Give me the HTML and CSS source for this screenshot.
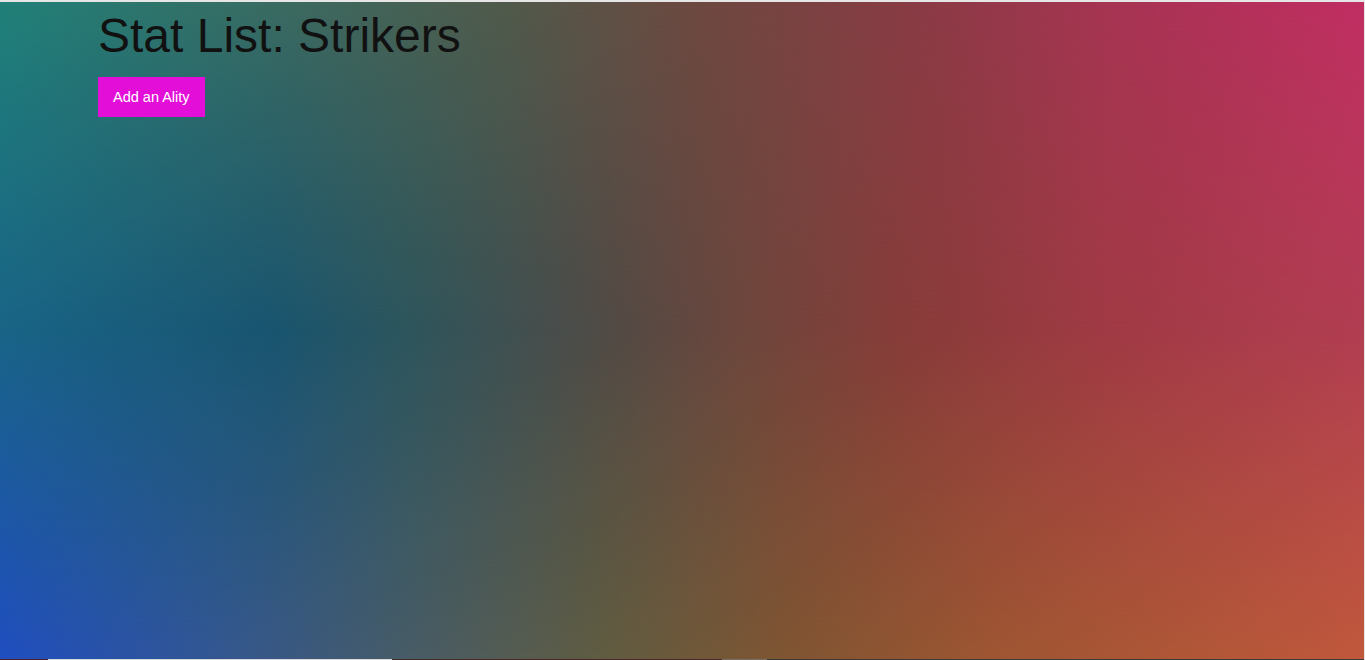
FILE: index.html
```
<!DOCTYPE html>
<html lang="en">
<head>
<meta charset="utf-8">
<title>Stat List: Strikers</title>
<link rel="stylesheet" href="styles.css">
</head>
<body>
<div class="frame">
  <main class="hero">
    <div class="container">
      <h1 class="title">Stat List: Strikers</h1>
      <button class="add-btn" type="button">Add an Ality</button>
    </div>
  </main>
  <div class="strip">
    <span class="seg seg-a"></span>
    <span class="seg seg-b"></span>
    <span class="seg seg-c"></span>
    <span class="seg seg-d"></span>
    <span class="seg seg-e"></span>
  </div>
</div>
</body>
</html>
```

FILE: styles.css
```
html, body {
  margin: 0;
  padding: 0;
  height: 100%;
  overflow: hidden;
}

body {
  font-family: "Liberation Sans", Arial, sans-serif;
  background: #e8e8e8;
}

.frame {
  display: flex;
  flex-direction: column;
  height: 660px;
  padding: 2px 1px 0 0;
  box-sizing: border-box;
  background: #e6e6e6;
}

.hero {
  position: relative;
  flex: 0 0 657px;
  background: linear-gradient(to right,
    rgb(25,100,135) 0%,
    rgb(25,85,112) 20%,
    rgb(45,85,92) 30%,
    rgb(80,75,70) 44%,
    rgb(110,70,60) 55%,
    rgb(135,60,57) 66%,
    rgb(160,58,68) 81%,
    rgb(178,62,82) 100%);
}

.hero::before,
.hero::after {
  content: "";
  position: absolute;
  inset: 0;
}

.hero::before {
  background: linear-gradient(to right,
    rgb(32,128,120) 0%,
    rgb(60,105,95) 22%,
    rgb(80,90,75) 37%,
    rgb(108,72,64) 51%,
    rgb(135,60,68) 66%,
    rgb(165,52,82) 81%,
    rgb(192,46,98) 100%);
  -webkit-mask-image: linear-gradient(to bottom, #000 0%, transparent 50%);
  mask-image: linear-gradient(to bottom, #000 0%, transparent 50%);
}

.hero::after {
  background: linear-gradient(to right,
    rgb(32,78,192) 0%,
    rgb(50,86,148) 15%,
    rgb(70,92,105) 29%,
    rgb(95,92,65) 44%,
    rgb(128,85,50) 58%,
    rgb(158,86,50) 73%,
    rgb(192,88,60) 100%);
  -webkit-mask-image: linear-gradient(to top, #000 0%, transparent 50%);
  mask-image: linear-gradient(to top, #000 0%, transparent 50%);
}

.container {
  position: relative;
  z-index: 1;
  max-width: 1168px;
  margin: 0 auto;
  padding-top: 6px;
  display: flex;
  flex-direction: column;
  align-items: flex-start;
}

.title {
  margin: 0 0 14px;
  font-size: 48px;
  font-weight: 400;
  color: #111;
  line-height: normal;
}

.add-btn {
  height: 40px;
  padding: 0 15px;
  border: 0;
  border-radius: 0;
  background: #e30fd8;
  color: #fff;
  font-family: "Liberation Sans", Arial, sans-serif;
  font-size: 14.5px;
  line-height: 16px;
  cursor: pointer;
}

.strip {
  display: flex;
  flex: 0 0 1px;
}

.seg { display: block; height: 1px; }
.seg-a { width: 48px; background: #4a1f2e; }
.seg-b { width: 344px; background: #d8d8d8; }
.seg-c { width: 330px; background: #4a2a28; }
.seg-d { width: 45px; background: #7a6e62; }
.seg-e { flex: 1; background: #3a3a3e; }
```
